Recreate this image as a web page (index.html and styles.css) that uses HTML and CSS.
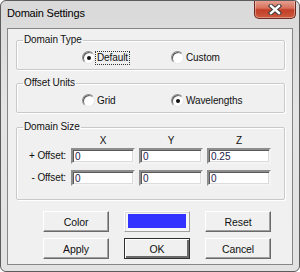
FILE: index.html
```html
<!DOCTYPE html>
<html lang="en">
<head>
    <meta charset="UTF-8">
    <title>Domain Settings</title>
    <link rel="stylesheet" href="styles.css">
</head>
<body>
    <div class="window">
        <div class="titlebar">
            <span class="title">Domain Settings</span>
            <button class="close-button" aria-label="Close">
                <svg width="14" height="11" viewBox="0 0 14 11">
                    <path d="M3 2 L11 9 M11 2 L3 9" stroke="#3a3a3a" stroke-width="4.4" stroke-linecap="square"/>
                    <path d="M3 2 L11 9 M11 2 L3 9" stroke="#ffffff" stroke-width="2.4" stroke-linecap="square"/>
                </svg>
            </button>
        </div>
        <div class="client">
            <fieldset class="group group-small">
                <legend>Domain Type</legend>
                <div class="radio-row">
                    <label class="option"><span class="radio checked"></span><span class="focus">Default</span></label>
                    <label class="option"><span class="radio"></span><span class="text">Custom</span></label>
                </div>
            </fieldset>

            <fieldset class="group group-small">
                <legend>Offset Units</legend>
                <div class="radio-row">
                    <label class="option"><span class="radio"></span><span class="text">Grid</span></label>
                    <label class="option"><span class="radio checked"></span><span class="text">Wavelengths</span></label>
                </div>
            </fieldset>

            <fieldset class="group group-size">
                <legend>Domain Size</legend>
                <div class="size-head">
                    <span></span><span>X</span><span>Y</span><span>Z</span>
                </div>
                <div class="size-grid">
                    <span class="row-label">+ Offset:</span>
                    <input class="field" type="text" value="0">
                    <input class="field" type="text" value="0">
                    <input class="field" type="text" value="0.25">
                    <span class="row-label">- Offset:</span>
                    <input class="field" type="text" value="0">
                    <input class="field" type="text" value="0">
                    <input class="field" type="text" value="0">
                </div>
            </fieldset>

            <div class="button-grid">
                <button class="btn">Color</button>
                <div class="swatch"><div class="swatch-fill"></div></div>
                <button class="btn">Reset</button>
                <button class="btn">Apply</button>
                <button class="btn btn-default">OK</button>
                <button class="btn">Cancel</button>
            </div>
        </div>
    </div>
</body>
</html>
```

FILE: styles.css
```css
body {
    margin: 0;
    background-color: #ffffff;
    font-family: "Liberation Sans", Arial, sans-serif;
}

.window {
    width: 300px;
    height: 272px;
    box-sizing: border-box;
    border: 1px solid #5c5c5c;
    border-radius: 6px;
    background: linear-gradient(#d9d9d9, #e4e4e4 40%, #e2e2e2);
    display: flex;
    flex-direction: column;
    overflow: hidden;
}

/* Title bar */
.titlebar {
    height: 27px;
    display: flex;
    align-items: flex-start;
}

.title {
    margin: 5px 0 0 6px;
    font-size: 11px;
    letter-spacing: -0.2px;
    line-height: 14px;
    color: #000000;
}

.close-button {
    margin: -1px 3px 0 auto;
    width: 42px;
    height: 19px;
    padding: 0;
    border: 1px solid #6e2a1f;
    border-top: none;
    border-radius: 0 0 5px 5px;
    background: linear-gradient(#e8a697, #d8705c 45%, #c23e27 55%, #cc5a3e);
    box-shadow: inset 0 0 0 1px rgba(255, 255, 255, 0.35);
    display: flex;
    align-items: center;
    justify-content: center;
}

/* Client area */
.client {
    flex: 1;
    margin: 0 6px 6px;
    border: 1px solid #868686;
    background-color: #f0f0f0;
    padding: 5px 7px 0 8px;
    font-size: 10px;
    letter-spacing: -0.1px;
    color: #101010;
}

.group {
    margin: 0;
    padding: 0;
    border: 1px solid #c9c9c9;
    border-radius: 2px;
    box-shadow: inset 1px 1px #ffffff, 1px 1px #ffffff;
}

.group legend {
    margin-left: 6px;
    padding: 0 1px;
    line-height: 12px;
}

.group-small {
    padding: 5px 0 5px;
}

.group-small + .group-small {
    margin-top: 7px;
}

.radio-row {
    display: flex;
    padding-left: 65px;
}

.option {
    width: 89px;
    height: 13px;
    display: flex;
    align-items: center;
    gap: 2px;
}

.radio {
    width: 13px;
    height: 13px;
    box-sizing: border-box;
    border-radius: 50%;
    border: 1px solid;
    border-color: #8a8a8a #e8e8e8 #e8e8e8 #8a8a8a;
    background: radial-gradient(circle at 60% 60%, #ffffff 50%, #e6e6e6);
    box-shadow: inset 1px 1px #5e5e5e;
    display: flex;
    align-items: center;
    justify-content: center;
}

.radio.checked::after {
    content: "";
    width: 4px;
    height: 4px;
    border-radius: 50%;
    background-color: #111111;
}

.text {
    line-height: 13px;
}

.focus {
    line-height: 12px;
    padding: 0 1px;
    margin-left: -1px;
    outline: 1px dotted #333333;
}

/* Domain size */
.group-size {
    margin-top: 8px;
    padding: 2px 0 13px;
}

.size-head,
.size-grid {
    display: grid;
    grid-template-columns: 50px 64px 64px 64px;
    column-gap: 4px;
}

.size-head {
    text-align: center;
    line-height: 12px;
    margin-bottom: 1px;
}

.size-grid {
    row-gap: 6px;
}

.row-label {
    text-align: right;
    line-height: 16px;
    padding-right: 1px;
}

.field {
    width: 64px;
    height: 16px;
    box-sizing: border-box;
    margin: 0;
    padding: 0 2px;
    border: 2px solid;
    border-color: #8d8d8d #f4f4f4 #f4f4f4 #8d8d8d;
    box-shadow: inset 1px 1px #5a5a5a, inset -1px -1px #dcdcdc;
    background-color: #ffffff;
    font-family: inherit;
    font-size: 10px;
    color: #1a1a4a;
    outline: none;
}

/* Buttons */
.button-grid {
    margin-top: 11px;
    padding-left: 27px;
    display: grid;
    grid-template-columns: 66px 66px 66px;
    grid-auto-rows: 21px;
    column-gap: 15px;
    row-gap: 6px;
}

.btn {
    margin: 0;
    padding: 0;
    border: 1px solid;
    border-color: #ffffff #6a6a6a #6a6a6a #ffffff;
    box-shadow: inset -1px -1px #a0a0a0;
    background-color: #f0f0f0;
    font-family: inherit;
    font-size: 10.5px;
    letter-spacing: -0.1px;
    color: #101010;
}

.btn-default {
    border: 1px solid #303030;
    box-shadow: inset 1px 1px #ffffff, inset -2px -2px #6a6a6a;
}

.swatch {
    box-sizing: border-box;
    border: 1px solid;
    border-color: #ffffff #a0a0a0 #a0a0a0 #ffffff;
    box-shadow: inset 1px 1px #d8d8d8;
    padding: 2px 3px 3px 3px;
    background-color: #f7f7f7;
}

.swatch-fill {
    height: 100%;
    background-color: #3333ff;
}
```
